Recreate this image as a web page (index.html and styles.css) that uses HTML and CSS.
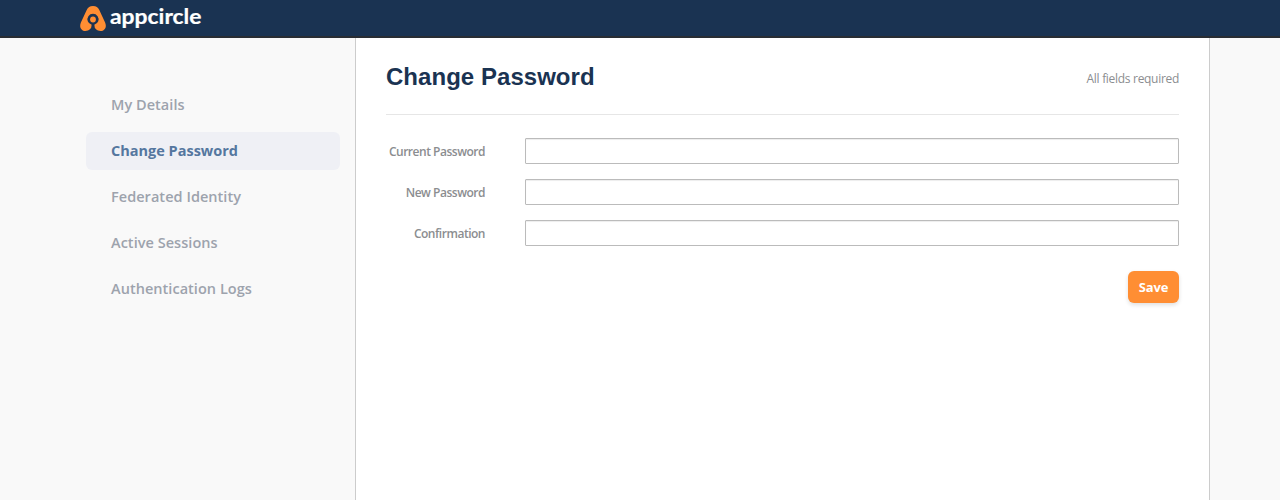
FILE: index.html
```html
<!DOCTYPE html>
<html lang="en">
<head>
<meta charset="utf-8">
<title>Change Password</title>
<link rel="stylesheet" href="styles.css">
</head>
<body>
<header class="topbar">
  <svg class="logo" width="126" height="32" viewBox="0 0 126 32" role="img" aria-label="appcircle">
    <path class="logo-mark" d="M13 6C9.700 6 8 7.400 6.700 10L.9 22.500C-1.200 27.300 1.600 31 5.400 31C9 31 11.700 28.500 11.700 25.300H14.300C14.300 28.500 17 31 20.600 31C24.400 31 27.200 27.300 25.100 22.500L19.300 10C18 7.400 16.300 6 13 6Z"/>
    <path class="logo-ring" d="M11.700 27V24.800A5.600 5.600 0 1 1 14.300 24.800V27Z"/>
    <circle class="logo-mark" cx="13" cy="19.500" r="2.900"/>
    <text class="wordmark" x="30" y="23.500" textLength="91.500" lengthAdjust="spacingAndGlyphs">appcircle</text>
  </svg>
</header>
<div class="container">
  <nav class="sidebar">
    <a class="nav-item">My Details</a>
    <a class="nav-item active">Change Password</a>
    <a class="nav-item">Federated Identity</a>
    <a class="nav-item">Active Sessions</a>
    <a class="nav-item">Authentication Logs</a>
  </nav>
  <main class="content">
    <div class="heading">
      <h1>Change Password</h1>
      <span class="note">All fields required</span>
    </div>
    <form class="form">
      <div class="row"><label for="current">Current Password</label><input id="current" type="password"></div>
      <div class="row"><label for="new">New Password</label><input id="new" type="password"></div>
      <div class="row"><label for="confirm">Confirmation</label><input id="confirm" type="password"></div>
      <div class="actions"><button class="save" type="button">Save</button></div>
    </form>
  </main>
</div>
</body>
</html>
```
FILE: styles.css
```css
* { box-sizing: border-box; }
body {
  margin: 0;
  height: 100vh;
  overflow: hidden;
  display: flex;
  flex-direction: column;
  background: #f9f9f9;
  font-family: "Open Sans", "Noto Sans", sans-serif;
}
.topbar {
  height: 38px;
  flex: none;
  padding-left: 80px;
  background: #1a3352;
  border-bottom: 2px solid #292d33;
}
.logo { display: block; }
.logo-mark { fill: #ff8e33; }
.logo-ring { fill: #1a3352; }
.wordmark {
  fill: #fff;
  stroke: #fff;
  stroke-width: .2px;
  font: 700 21.5px Lato, sans-serif;
}
.container {
  flex: 1;
  display: flex;
  width: 1140px;
  margin-left: 70px;
}
.sidebar {
  width: 285px;
  padding: 48px 15px 0 16px;
  display: flex;
  flex-direction: column;
  gap: 8px;
}
.nav-item {
  height: 38px;
  padding-left: 25px;
  border-radius: 6px;
  color: #9da3ad;
  font-size: 14.5px;
  font-weight: 600;
  line-height: 37px;
  letter-spacing: .04px;
}
.active {
  background: #eff0f5;
  color: #55779f;
  font-weight: 700;
  letter-spacing: 0;
}
.content {
  width: 855px;
  padding: 0 30px;
  background: #fff;
  border: solid #ccc;
  border-width: 0 1px;
}
.heading {
  height: 77px;
  display: flex;
  justify-content: space-between;
  align-items: center;
  border-bottom: 1px solid #e6e6e6;
}
h1 {
  margin: 0;
  padding-top: 2px;
  color: #1a3352;
  font: 700 24px/28px "Liberation Sans", Arial, sans-serif;
  letter-spacing: .04px;
}
.note {
  padding-top: 5px;
  color: #8b8d90;
  font-size: 12px;
  letter-spacing: -.3px;
}
.form {
  padding-top: 23px;
  display: flex;
  flex-direction: column;
  gap: 15px;
}
.row {
  display: flex;
  justify-content: space-between;
}
label {
  width: 99px;
  height: 26px;
  color: #8b8d90;
  font-size: 12px;
  font-weight: 600;
  line-height: 27px;
  text-align: right;
  white-space: nowrap;
  letter-spacing: -.48px;
}
input {
  width: 654px;
  height: 26px;
  padding: 2px 6px;
  border: 1px solid #bbb;
  border-radius: 1px;
  background: #fff;
  box-shadow: inset 0 1px 1px rgba(0,0,0,.075);
}
.actions {
  padding-top: 10px;
  display: flex;
  justify-content: flex-end;
}
.save {
  width: 51px;
  height: 32px;
  padding: 0;
  border: 0;
  border-radius: 6px;
  background: #ff8e33;
  box-shadow: 0 2px 4px rgba(0,0,0,.13);
  color: #fff;
  font: 700 13px/32px "Open Sans", sans-serif;
  letter-spacing: -.15px;
}
```
